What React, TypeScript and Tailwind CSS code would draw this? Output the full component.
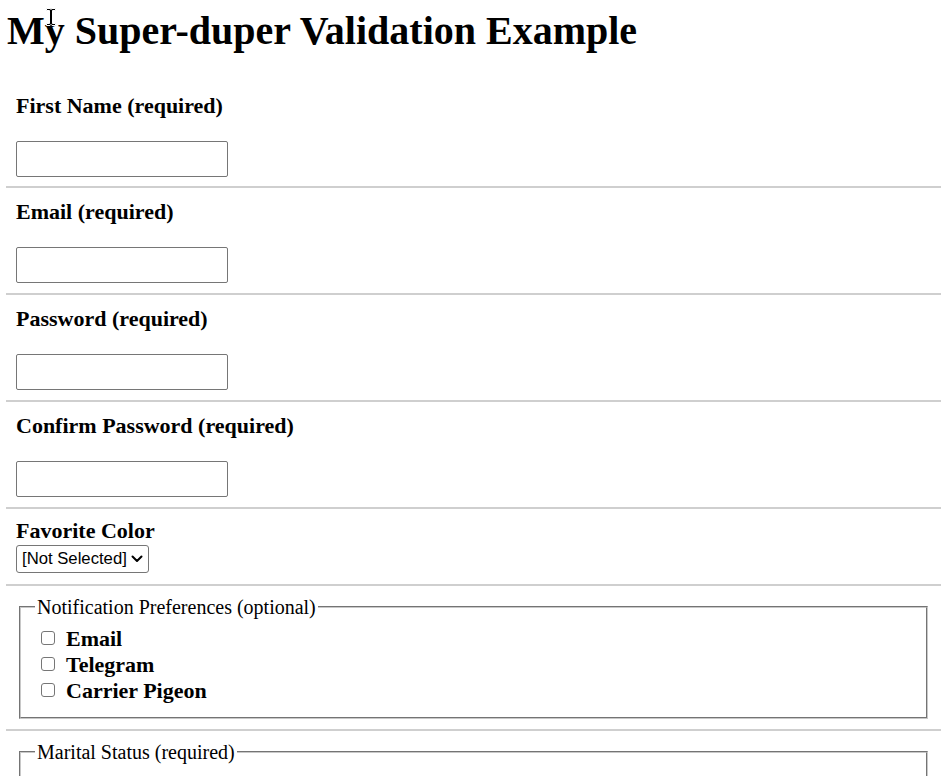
import { useState } from 'react'

const fields = [
  { id: 'firstName', label: 'First Name (required)', type: 'text' },
  { id: 'email', label: 'Email (required)', type: 'email' },
  { id: 'password', label: 'Password (required)', type: 'password' },
  { id: 'confirm', label: 'Confirm Password (required)', type: 'password' },
]

const notifications = ['Email', 'Telegram', 'Carrier Pigeon']
const statuses = ['Single', 'Married', 'Divorced', 'Widowed']

function Chevron() {
  return (
    <svg width="12" height="8" viewBox="0 0 12 8" fill="none" stroke="#000" strokeWidth={2} strokeLinecap="round" strokeLinejoin="round">
      <path d="M1.5 1.5 L6 6 L10.5 1.5" />
    </svg>
  )
}

export default function App() {
  const [values, setValues] = useState<Record<string, string>>({})
  const [checked, setChecked] = useState<Record<string, boolean>>({})

  return (
    <div className="relative min-h-screen bg-white text-black font-['Liberation_Serif','Times_New_Roman',serif]">
      {/* mouse cursor sitting over the heading */}
      <svg className="absolute left-[45px] top-[7px] pointer-events-none" width="12" height="20" viewBox="0 0 12 20">
        <path d="M1.5 1.5h3.5l1 1 1-1h3.5v2H7.5v13h3v2H7l-1-1-1 1H1.5v-2h3v-13h-3z" fill="#000" stroke="#fff" strokeWidth={1} />
      </svg>

      <h1 className="pt-[9px] pl-[7px] text-[40px] leading-[44px] font-bold">My Super-duper Validation Example</h1>

      <form className="mt-[29px] ml-[6px] mr-[8px]" onSubmit={(e) => e.preventDefault()}>
        {fields.map((f, i) => (
          <div key={f.id} className={`px-[10px] pt-[11px] border-b-2 border-[#cfcfcf] ${i === 0 ? 'pb-[9px]' : 'pb-[10px]'}`}>
            <label htmlFor={f.id} className="block text-[22px] leading-[25px] font-bold mb-[23px]">
              {f.label}
            </label>
            <input
              id={f.id}
              type={f.type}
              value={values[f.id] ?? ''}
              onChange={(e) => setValues({ ...values, [f.id]: e.target.value })}
              className="block w-[212px] h-[36px] border border-[#767676] rounded-[2px] px-2 text-[16px] outline-none"
            />
          </div>
        ))}

        <div className="px-[10px] pt-[9px] pb-[11px] border-b-2 border-[#cfcfcf]">
          <label className="block text-[22px] leading-[25px] font-bold">Favorite Color</label>
          <div className="mt-[2px] w-[133px] h-[28px] flex items-center justify-between pl-[5px] pr-[5px] border border-[#767676] rounded-[3px] font-['Liberation_Sans',Arial,sans-serif] text-[16.7px] leading-none">
            <span>[Not Selected]</span>
            <Chevron />
          </div>
        </div>

        <div className="px-[10px] pt-[10px] pb-[10px] border-b-2 border-[#cfcfcf]">
          <fieldset className="mx-[3px] border-2 [border-style:groove] border-[#c8c8c8] pl-[14px] pr-[14px] pt-[7px] pb-[14px]">
            <legend className="px-[2px] text-[20px] leading-[22px]">Notification Preferences (optional)</legend>
            {notifications.map((n) => (
              <label key={n} className="flex items-center h-[26px] text-[22px] font-bold">
                <input
                  type="checkbox"
                  checked={!!checked[n]}
                  onChange={() => setChecked({ ...checked, [n]: !checked[n] })}
                  className="appearance-none ml-[6px] w-[14px] h-[14px] border border-[#767676] rounded-[3px] bg-white"
                />
                <span className="ml-[11px]">{n}</span>
              </label>
            ))}
          </fieldset>
        </div>

        <div className="px-[10px] pt-[10px] pb-[12px]">
          <fieldset className="mx-[3px] border-2 [border-style:groove] border-[#c8c8c8] pl-[14px] pr-[14px] pt-[7px] pb-[12px]">
            <legend className="px-[2px] text-[20px] leading-[22px]">Marital Status (required)</legend>
            {statuses.map((s) => (
              <label key={s} className="flex items-center h-[26px] text-[22px] font-bold">
                <input type="radio" name="marital" className="appearance-none ml-[6px] w-[14px] h-[14px] border border-[#767676] rounded-full bg-white" />
                <span className="ml-[11px]">{s}</span>
              </label>
            ))}
          </fieldset>
        </div>
      </form>
    </div>
  )
}
